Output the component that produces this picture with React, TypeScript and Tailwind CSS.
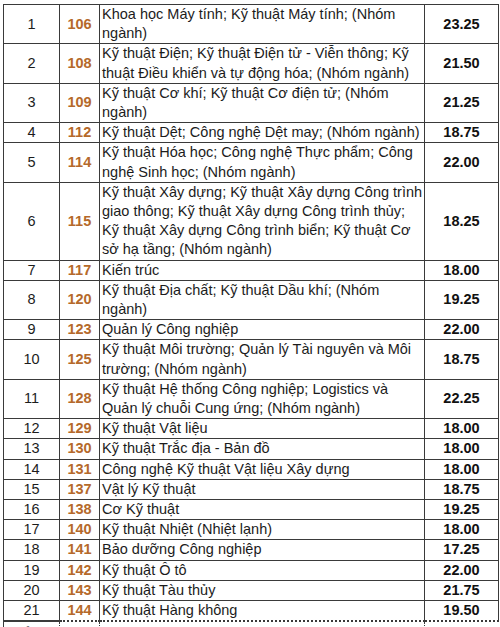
const rows: [number, number, string, string][] = [
  [1, 106, 'Khoa học Máy tính; Kỹ thuật Máy tính; (Nhóm ngành)', '23.25'],
  [2, 108, 'Kỹ thuật Điện; Kỹ thuật Điện tử - Viễn thông; Kỹ thuật Điều khiển và tự động hóa; (Nhóm ngành)', '21.50'],
  [3, 109, 'Kỹ thuật Cơ khí; Kỹ thuật Cơ điện tử; (Nhóm ngành)', '21.25'],
  [4, 112, 'Kỹ thuật Dệt; Công nghệ Dệt may; (Nhóm ngành)', '18.75'],
  [5, 114, 'Kỹ thuật Hóa học; Công nghệ Thực phẩm; Công nghệ Sinh học; (Nhóm ngành)', '22.00'],
  [6, 115, 'Kỹ thuật Xây dựng; Kỹ thuật Xây dựng Công trình giao thông; Kỹ thuật Xây dựng Công trình thủy; Kỹ thuật Xây dựng Công trình biển; Kỹ thuật Cơ sở hạ tầng; (Nhóm ngành)', '18.25'],
  [7, 117, 'Kiến trúc', '18.00'],
  [8, 120, 'Kỹ thuật Địa chất; Kỹ thuật Dầu khí; (Nhóm ngành)', '19.25'],
  [9, 123, 'Quản lý Công nghiệp', '22.00'],
  [10, 125, 'Kỹ thuật Môi trường; Quản lý Tài nguyên và Môi trường; (Nhóm ngành)', '18.75'],
  [11, 128, 'Kỹ thuật Hệ thống Công nghiệp; Logistics và Quản lý chuỗi Cung ứng; (Nhóm ngành)', '22.25'],
  [12, 129, 'Kỹ thuật Vật liệu', '18.00'],
  [13, 130, 'Kỹ thuật Trắc địa - Bản đồ', '18.00'],
  [14, 131, 'Công nghệ Kỹ thuật Vật liệu Xây dựng', '18.00'],
  [15, 137, 'Vật lý Kỹ thuật', '18.75'],
  [16, 138, 'Cơ Kỹ thuật', '19.25'],
  [17, 140, 'Kỹ thuật Nhiệt (Nhiệt lạnh)', '18.00'],
  [18, 141, 'Bảo dưỡng Công nghiệp', '17.25'],
  [19, 142, 'Kỹ thuật Ô tô', '22.00'],
  [20, 143, 'Kỹ thuật Tàu thủy', '21.75'],
  [21, 144, 'Kỹ thuật Hàng không', '19.50'],
];

export default function App() {
  return (
    <div
      className="w-[500px] h-[627px] overflow-hidden bg-white pt-[4px] pl-[3px] text-[#1c1c1c]"
      style={{ fontFamily: '"Liberation Sans", Arial, sans-serif' }}
    >
      <table className="w-[495px] border-collapse table-fixed text-[14.5px] leading-[19.2px]">
        <colgroup>
          <col className="w-[56px]" />
          <col className="w-[40px]" />
          <col className="w-[325px]" />
          <col className="w-[74px]" />
        </colgroup>
        <tbody>
          {rows.map(([stt, code, name, score]) => (
            <tr key={stt}>
              <td className="border border-[#3a3a3a] text-center align-middle p-0">{stt}</td>
              <td className="border border-[#3a3a3a] text-center align-middle p-0 font-bold text-[#b5692a]">
                {code}
              </td>
              <td className="border border-[#3a3a3a] align-middle pl-[2px] pr-0 py-0">{name}</td>
              <td className="border border-[#3a3a3a] text-center align-middle p-0 font-bold text-[#111]">
                {score}
              </td>
            </tr>
          ))}
          <tr>
            <td className="border-t-2 border-l border-[#3a3a3a] px-[4px] pt-[2px] pb-0">Điểm</td>
            <td className="border-t-2 border-l border-dotted border-[#3a3a3a]" />
            <td className="border-t-2 border-l border-dotted border-[#3a3a3a]" />
            <td className="border-t-2 border-l border-dotted border-[#3a3a3a]" />
          </tr>
        </tbody>
      </table>
    </div>
  );
}
